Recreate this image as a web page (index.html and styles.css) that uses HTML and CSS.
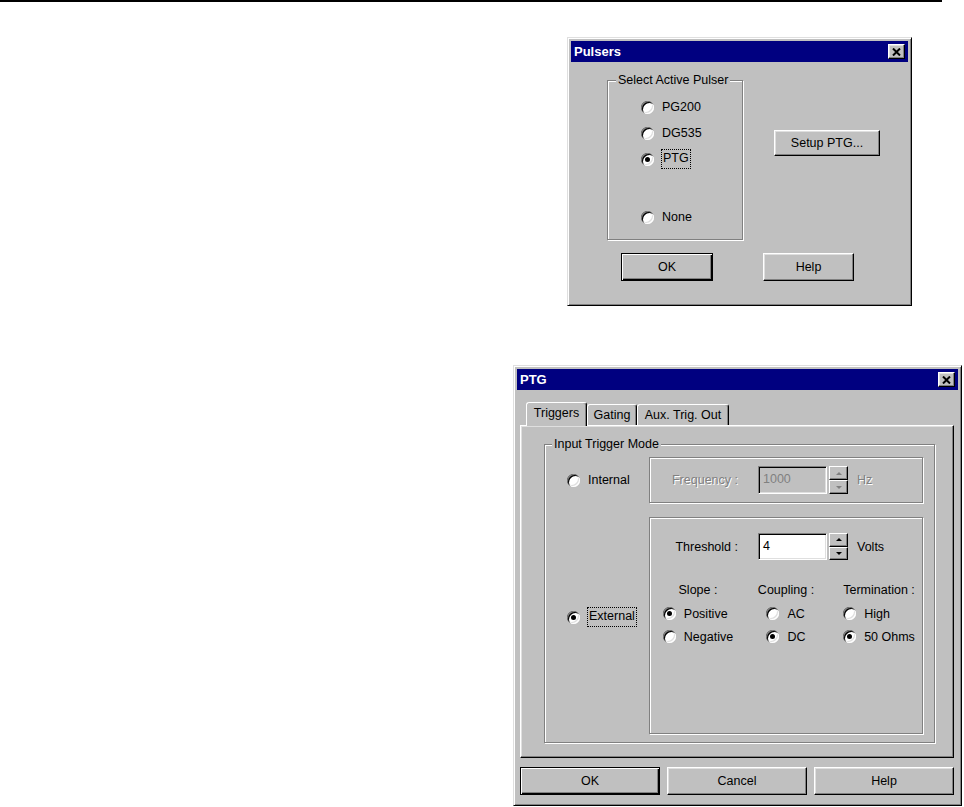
FILE: index.html
```html
<!DOCTYPE html>
<html lang="en">
<head>
  <meta charset="UTF-8" />
  <title>Pulsers / PTG</title>
  <link rel="stylesheet" href="styles.css">
</head>
<body>
  <div class="rule"></div>

  <div class="window pulsers">
    <div class="titlebar">
      <span class="title">Pulsers</span>
      <button class="btn close"><svg width="9" height="8" viewBox="0 0 9 8"><path d="M1 0.5 L8 7.5 M8 0.5 L1 7.5" stroke="#000" stroke-width="2"/></svg></button>
    </div>
    <div class="pulsers-body">
      <div class="pulsers-top">
        <fieldset class="group pulser-group">
          <legend>Select Active Pulser</legend>
          <div class="pulser-list">
            <label class="opt"><span class="radio"></span>PG200</label>
            <label class="opt"><span class="radio"></span>DG535</label>
            <label class="opt"><span class="radio on"></span><span class="focus">PTG</span></label>
            <label class="opt opt-none"><span class="radio"></span>None</label>
          </div>
        </fieldset>
        <button class="btn setup">Setup PTG...</button>
      </div>
      <div class="pulsers-buttons">
        <button class="btn default ok">OK</button>
        <button class="btn help">Help</button>
      </div>
    </div>
  </div>

  <div class="window ptg">
    <div class="titlebar">
      <span class="title">PTG</span>
      <button class="btn close"><svg width="9" height="8" viewBox="0 0 9 8"><path d="M1 0.5 L8 7.5 M8 0.5 L1 7.5" stroke="#000" stroke-width="2"/></svg></button>
    </div>
    <div class="ptg-body">
      <div class="tabs">
        <div class="tab active">Triggers</div>
        <div class="tab tab-gating">Gating</div>
        <div class="tab tab-aux">Aux. Trig. Out</div>
      </div>
      <div class="tab-panel">
        <fieldset class="group trigger-group">
          <legend>Input Trigger Mode</legend>
          <div class="trigger-grid">
            <div class="mode">
              <label class="opt"><span class="radio"></span>Internal</label>
            </div>
            <div class="box freq-box">
              <span class="field-label disabled">Frequency :</span>
              <div class="field disabled-field">1000</div>
              <div class="spin">
                <span class="spin-btn"><i class="arrow up grey"></i></span>
                <span class="spin-btn"><i class="arrow down grey"></i></span>
              </div>
              <span class="unit disabled">Hz</span>
            </div>

            <div class="mode mode-ext">
              <label class="opt"><span class="radio on"></span><span class="focus">External</span></label>
            </div>
            <div class="box ext-box">
              <div class="field-row">
                <span class="field-label">Threshold :</span>
                <div class="field">4</div>
                <div class="spin">
                  <span class="spin-btn"><i class="arrow up"></i></span>
                  <span class="spin-btn"><i class="arrow down"></i></span>
                </div>
                <span class="unit">Volts</span>
              </div>
              <div class="options">
                <div class="col col-slope">
                  <div class="col-head">Slope :</div>
                  <div class="col-list">
                    <label class="opt row"><span class="radio on"></span>Positive</label>
                    <label class="opt row"><span class="radio"></span>Negative</label>
                  </div>
                </div>
                <div class="col col-coupling">
                  <div class="col-head">Coupling :</div>
                  <div class="col-list">
                    <label class="opt row"><span class="radio"></span>AC</label>
                    <label class="opt row"><span class="radio on"></span>DC</label>
                  </div>
                </div>
                <div class="col col-term">
                  <div class="col-head">Termination :</div>
                  <div class="col-list">
                    <label class="opt row"><span class="radio"></span>High</label>
                    <label class="opt row"><span class="radio on"></span>50 Ohms</label>
                  </div>
                </div>
              </div>
            </div>
          </div>
        </fieldset>
      </div>
      <div class="dialog-buttons">
        <button class="btn default wide">OK</button>
        <button class="btn wide">Cancel</button>
        <button class="btn wide">Help</button>
      </div>
    </div>
  </div>
</body>
</html>
```

FILE: styles.css
```css
* { box-sizing: border-box; }
body {
  margin: 0;
  background: #fff;
  color: #000;
  font-family: "Liberation Sans", Arial, sans-serif;
  font-size: 12.5px;
}
.rule {
  width: 942px;
  height: 2px;
  background: #000;
}

/* windows */
.window {
  position: absolute;
  display: flex;
  flex-direction: column;
  padding: 3px;
  background: #c0c0c0;
  border: 1px solid;
  border-color: #dfdfdf #000 #000 #dfdfdf;
  box-shadow: inset 1px 1px #fff, inset -1px -1px #808080;
}
.pulsers { left: 567px; top: 37px; width: 345px; height: 269px; }
.ptg { left: 513px; top: 365px; width: 449px; height: 441px; }

.titlebar {
  height: 21px;
  flex: none;
  display: flex;
  align-items: center;
  justify-content: space-between;
  padding: 0 3px 0 3px;
  background: #000080;
  color: #fff;
}
.title { font-weight: bold; font-size: 13px; }

/* buttons */
button { font: inherit; color: #000; margin: 0; padding: 0; }
.btn {
  display: flex;
  align-items: center;
  justify-content: center;
  background: #c0c0c0;
  border: 1px solid;
  border-color: #fff #000 #000 #fff;
  box-shadow: inset -1px -1px #808080, inset 1px 1px #dfdfdf;
}
.btn.default {
  border-color: #000;
  box-shadow: inset 1px 1px #fff, inset -1px -1px #000, inset -2px -2px #808080;
}
.close { width: 17px; height: 15px; }

/* radios */
.opt {
  display: flex;
  align-items: center;
  gap: 8px;
  white-space: nowrap;
}
.radio {
  position: relative;
  flex: none;
  width: 13px;
  height: 13px;
  border-radius: 50%;
  background: #fff;
  box-shadow: inset 1px 1px #808080, inset 2px 2px #000, inset -1px -1px #fff, inset -2px -2px #dfdfdf;
}
.radio.on::after {
  content: "";
  position: absolute;
  left: 4px;
  top: 4px;
  width: 5px;
  height: 5px;
  border-radius: 50%;
  background: #000;
}
.focus {
  outline: 1px dotted #000;
  padding: 1px 1px 2px;
  line-height: 15px;
}

/* group boxes */
.group {
  margin: 0;
  min-width: 0;
  border: 1px solid #808080;
  box-shadow: inset 1px 1px #fff, 1px 1px #fff;
}
.group legend {
  padding: 0 2px;
  line-height: 15px;
  background: #c0c0c0;
}
.box {
  border: 1px solid #808080;
  box-shadow: inset 1px 1px #fff, 1px 1px #fff;
}

/* Pulsers dialog */
.pulsers-body { padding: 11px 0 0 36px; }
.pulsers-top { display: flex; align-items: flex-start; }
.pulser-group {
  width: 136px;
  padding: 6px 0 9px 8px;
}
.pulser-list { margin-left: 25px; }
.pulser-list .opt { height: 26px; }
.pulser-list .opt-none { margin-top: 32px; }
.setup { margin: 57px 0 0 31px; width: 106px; height: 26px; }
.pulsers-buttons { display: flex; margin-top: 13px; }
.pulsers-buttons .ok { margin-left: 14px; width: 92px; height: 28px; }
.pulsers-buttons .help { margin-left: 50px; width: 91px; height: 28px; }

/* PTG dialog */
.ptg-body {
  display: flex;
  flex-direction: column;
  padding: 12px 4px 0 3px;
}
.tabs {
  display: flex;
  align-items: flex-end;
  height: 23px;
  padding-left: 6px;
  position: relative;
  z-index: 1;
}
.tab {
  display: flex;
  align-items: center;
  justify-content: center;
  height: 21px;
  padding-bottom: 1px;
  background: #c0c0c0;
  border: 1px solid;
  border-bottom: none;
  border-color: #fff #000 transparent #fff;
  border-radius: 3px 3px 0 0;
  box-shadow: inset -1px 0 #808080;
}
.tab.active { width: 61px; height: 24px; margin-bottom: -1px; padding-bottom: 3px; }
.tab-gating { width: 50px; }
.tab-aux { width: 92px; }

.tab-panel {
  height: 333px;
  padding: 11px 0 0 23px;
  border: 1px solid;
  border-color: #fff #000 #000 #fff;
  box-shadow: inset -1px -1px #808080, inset 1px 1px #dfdfdf;
}
.trigger-group {
  width: 391px;
  padding: 5px 11px 8px 7px;
}
.trigger-grid {
  display: grid;
  grid-template-columns: 97px 274px;
  grid-template-rows: 46px 217px;
  row-gap: 14px;
}
.mode { display: flex; align-items: center; padding-left: 15px; }
.mode-ext { align-items: flex-start; padding-top: 91px; }

.freq-box, .field-row { display: flex; align-items: center; }
.field-row { height: 27px; }
.field-label { width: 88px; text-align: right; }
.disabled { color: #808080; text-shadow: 1px 1px #fff; }
.field {
  display: flex;
  align-items: center;
  width: 69px;
  height: 27px;
  margin-left: 20px;
  padding: 0 4px 2px;
  background: #fff;
  border: 1px solid;
  border-color: #808080 #fff #fff #808080;
  box-shadow: inset 1px 1px #000, inset -1px -1px #dfdfdf;
}
.disabled-field { background: #c0c0c0; color: #808080; height: 28px; }
.spin {
  display: flex;
  flex-direction: column;
  width: 19px;
  height: 27px;
  margin-left: 2px;
}
.freq-box .spin { height: 28px; }
.spin-btn {
  flex: 1;
  display: flex;
  align-items: center;
  justify-content: center;
  background: #c0c0c0;
  border: 1px solid;
  border-color: #fff #000 #000 #fff;
  box-shadow: inset -1px -1px #808080;
}
.arrow { width: 0; height: 0; border-left: 3px solid transparent; border-right: 3px solid transparent; }
.arrow.up { border-bottom: 3px solid #000; }
.arrow.down { border-top: 3px solid #000; }
.arrow.up.grey { border-bottom-color: #808080; }
.arrow.down.grey { border-top-color: #808080; }
.unit { margin-left: 9px; }

.ext-box { display: flex; flex-direction: column; padding-top: 15px; }
.options { display: flex; margin-top: 22px; padding-left: 12px; }
.col { display: flex; flex-direction: column; align-items: center; }
.col-head { line-height: 16px; white-space: nowrap; }
.col-list { margin-top: 4px; }
.col-list .row { height: 23px; }
.col-slope { width: 72px; }
.col-coupling { width: 54px; margin-left: 25px; }
.col-term { width: 72px; margin-left: 30px; }

.dialog-buttons { display: flex; gap: 7px; margin-top: 9px; }
.btn.wide { width: 140px; height: 28px; }
```
